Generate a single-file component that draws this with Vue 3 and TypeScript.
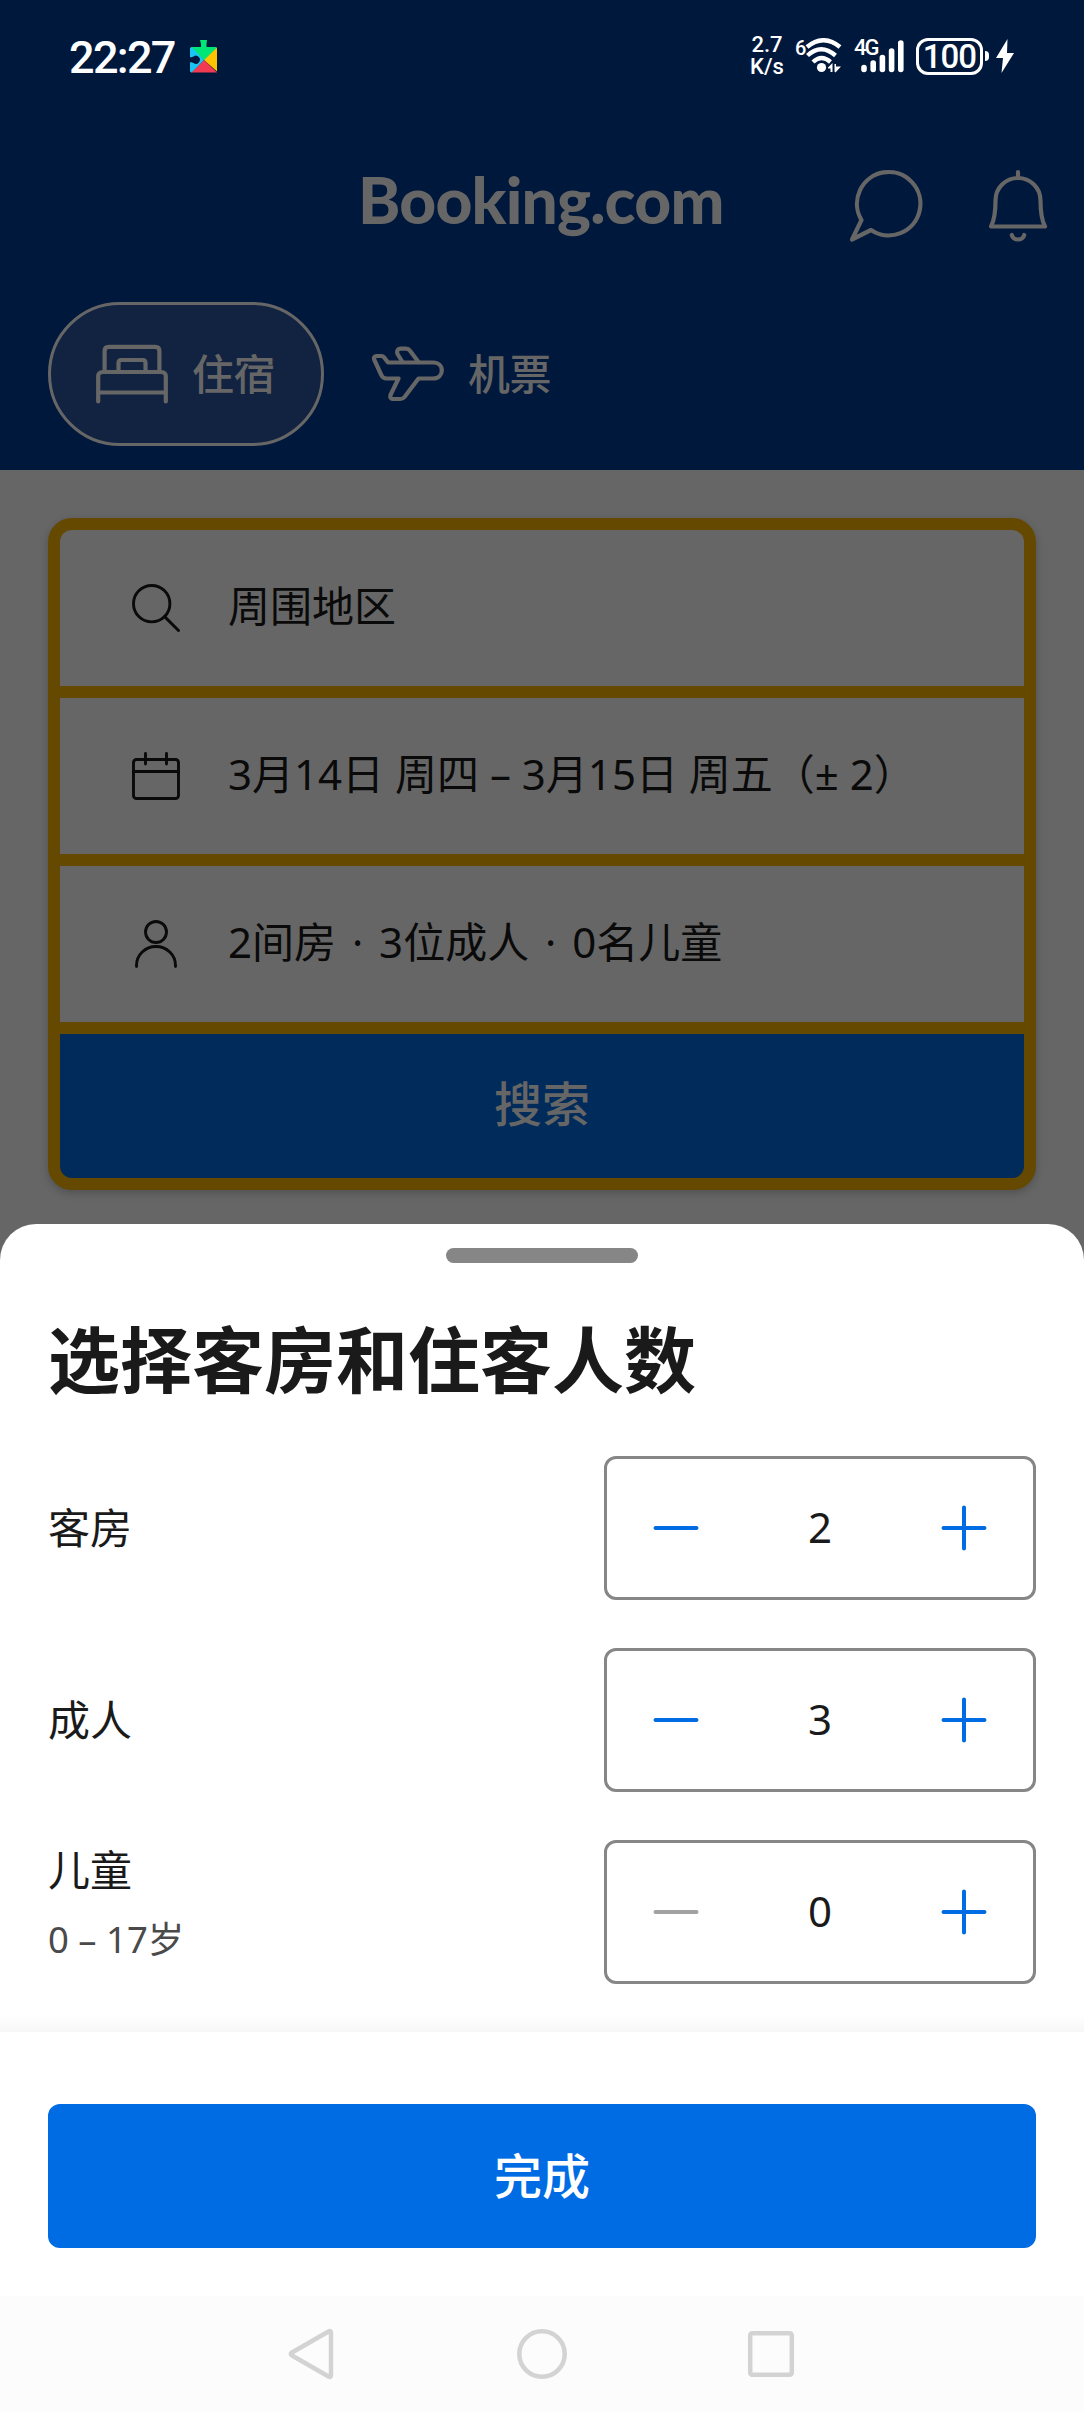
<script setup lang="ts">
import { reactive } from 'vue'

interface Counter {
  label: string
  hint?: string
  value: number
  min: number
}

const counters = reactive<Counter[]>([
  { label: '客房', value: 2, min: 1 },
  { label: '成人', value: 3, min: 1 },
  { label: '儿童', hint: '0 – 17岁', value: 0, min: 0 },
])

function change(c: Counter, delta: number) {
  c.value = Math.max(c.min, c.value + delta)
}
</script>

<template>
  <div class="screen">
    <header class="top">
      <div class="status">
        <span class="time">22:27</span>
        <svg class="puzzle" width="28" height="33" viewBox="0 0 28 33">
          <path d="M1 8 Q1 7 2 7 H11 V4 L10 0 H17 L16.500 4 V7 H26 L27 8 L14 20.500 Z" fill="#00e676" />
          <path d="M27 7.500 V31.500 L14 20 Z" fill="#ffc400" />
          <path d="M1 32.500 L14 20 L27 32.500 Z" fill="#f23b52" />
          <path d="M0 8 L1.500 7 L14 20 L1.500 32.500 L0 31.500 V22.500 C1.500 22 2 22.500 3.500 23 A4 4 0 1 0 3.500 16.500 C2 17 1.500 17.500 0 17 Z" fill="#18c5f5" />
        </svg>
        <div class="status-right">
          <div class="speed"><span>2.7</span><span>K/s</span></div>
          <div class="wifi">
            <span class="tiny">6</span>
            <svg width="38" height="36" viewBox="0 0 38 36" fill="none" stroke="#fff" stroke-width="4.400">
              <path d="M3 9 Q19.500 -4.500 36 9" />
              <path d="M3.500 17.500 Q17 5 31.500 17.500" />
              <path d="M9 24 Q17.500 16 26.500 24" />
              <circle cx="17.500" cy="29.500" r="4.600" fill="#fff" stroke="none" />
              <path d="M24 29.500 L28.500 25 V34 H26.500 V30.500 H24 Z M30.500 26 H32 V28.500 H37 L31.500 34.500 L30.500 33.500 Z" fill="#fff" stroke="none" />
            </svg>
          </div>
          <div class="cell">
            <span class="tiny net">4G</span>
            <svg width="50" height="36" viewBox="0 0 50 36" stroke="#fff" stroke-width="5.600" stroke-linecap="round">
              <path d="M10 29.500 V31.500 M19.200 25 V31.500 M28.400 19.500 V31.500 M37.600 13 V31.500 M46.800 5 V31.500" />
            </svg>
          </div>
          <div class="battery">100</div>
          <i class="nub"></i>
          <svg class="bolt" width="20" height="34" viewBox="0 0 20 34"><path d="M12.500 0 L1 19 H8 L6.500 34 L19 14 H12 Z" fill="#fff" /></svg>
        </div>
      </div>

      <div class="brandbar">
        <span class="logo">Booking.com</span>
        <svg class="chat" width="76" height="76" viewBox="0 0 76 76" fill="none" stroke="#666" stroke-width="4.200" stroke-linejoin="round" stroke-linecap="round">
          <path d="M21 62 L2 71.500 L11.500 52 A31.700 31.700 0 1 1 21 62 Z" />
        </svg>
        <svg class="bell" width="62" height="76" viewBox="0 0 62 76" fill="none" stroke="#666" stroke-width="4.200" stroke-linejoin="round" stroke-linecap="round">
          <path d="M31 4 V10 M8.500 32.500 A22.500 22.500 0 0 1 53.500 32.500 C53.500 44 54.500 52 58 58.500 H4 C7.500 52 8.500 44 8.500 32.500 Z M24.800 67 A6.300 5.500 0 0 0 37.200 67" />
        </svg>
      </div>

      <nav class="tabs">
        <div class="tab active">
          <svg width="72" height="60" viewBox="0 0 72 60" fill="none" stroke="#666" stroke-width="4.200" stroke-linecap="round" stroke-linejoin="round">
            <path d="M8.600 27 V7 Q8.600 2.800 12.800 2.800 H59.200 Q63.400 2.800 63.400 7 V27" />
            <path d="M22.500 27 V19 Q22.500 16 25.500 16 H46.500 Q49.500 16 49.500 19 V27" />
            <path d="M2.200 57.500 V32.500 Q2.200 28 7 28 H65 Q69.800 28 69.800 32.500 V57.500 M2.200 48.500 H69.800" />
          </svg>
          <span>住宿</span>
        </div>
        <div class="tab">
          <svg width="72" height="60" viewBox="0 0 72 60" fill="none" stroke="#666" stroke-width="4.200" stroke-linecap="round" stroke-linejoin="round">
            <path d="M16 18.500 H61 C66.500 18.500 69.800 22 69.800 26.500 C69.800 31 66.500 34.500 61 34.500 H46.500 L32.500 53 Q30.800 55 28.500 55 H21.500 Q17.500 55 18.500 51 L26.500 34.500 H14.500 Q10.800 34.500 9.300 31 L2.600 16.500 Q0.800 12.500 4.500 12 H9.500 Q11 12 12 13.300 Z" />
            <path d="M30.500 18 L25.500 10 Q24 5 28.500 4.600 H34 Q36.500 4.600 38 6.700 L46.500 18" />
          </svg>
          <span>机票</span>
        </div>
      </nav>
    </header>

    <main class="backdrop">
      <section class="search-card">
        <div class="field">
          <svg width="48" height="48" viewBox="0 0 48 48" fill="none" stroke="#0a0a0a" stroke-width="2.900" stroke-linecap="round">
            <circle cx="19.700" cy="19.700" r="18.200" /><path d="M32.600 32.600 L46.500 46.500" />
          </svg>
          <span>周围地区</span>
        </div>
        <div class="field">
          <svg width="48" height="48" viewBox="0 0 48 48" fill="none" stroke="#0a0a0a" stroke-width="2.900" stroke-linecap="round">
            <rect x="1.500" y="7.500" width="45" height="39" rx="3" /><path d="M2 19.500 H46 M13.500 1.500 V12 M34.500 1.500 V12" />
          </svg>
          <span>3月14日 周四 – 3月15日 周五（± 2）</span>
        </div>
        <div class="field">
          <svg width="48" height="48" viewBox="0 0 48 48" fill="none" stroke="#0a0a0a" stroke-width="2.900" stroke-linecap="round">
            <circle cx="24" cy="12" r="10.500" /><path d="M4.500 46.500 V45.500 A19.500 19 0 0 1 43.500 45.500 V46.500" />
          </svg>
          <span class="guests">2间房 · 3位成人 · 0名儿童</span>
        </div>
        <div class="search-btn">搜索</div>
      </section>
    </main>

    <div class="sheet-wrap">
      <section class="sheet">
        <div class="handle"></div>
        <h1>选择客房和住客人数</h1>
        <div class="counters">
          <div v-for="c in counters" :key="c.label" class="counter">
            <div class="names" :class="{ double: c.hint }">
              <span class="label">{{ c.label }}</span>
              <span v-if="c.hint" class="hint">{{ c.hint }}</span>
            </div>
            <div class="stepper">
              <svg :class="{ off: c.value <= c.min && c.min === 0 }" width="46" height="46" viewBox="0 0 46 46" @click="change(c, -1)">
                <path d="M2.500 23 H43.500" />
              </svg>
              <span class="value">{{ c.value }}</span>
              <svg width="46" height="46" viewBox="0 0 46 46" @click="change(c, 1)">
                <path d="M2.500 23 H43.500 M23 2.500 V43.500" />
              </svg>
            </div>
          </div>
        </div>
        <div class="fade"></div>
        <footer class="footer"><button class="done">完成</button></footer>
      </section>
    </div>

    <div class="navbar">
      <svg width="52" height="52" viewBox="0 0 52 52"><path d="M41.500 3.500 Q44 2 44 5 V47 Q44 50 41.500 48.500 L5 27.500 Q2.500 26 5 24.500 Z" /></svg>
      <svg width="52" height="52" viewBox="0 0 52 52"><circle cx="26" cy="26" r="22.700" /></svg>
      <svg width="52" height="52" viewBox="0 0 52 52"><rect x="5.200" y="5.200" width="41.600" height="41.600" rx="2" /></svg>
    </div>
  </div>
</template>

<style>
html,
body {
  margin: 0;
  background: #fff;
}
</style>

<style scoped>
.screen {
  width: 1084px;
  height: 2412px;
  display: flex;
  flex-direction: column;
  overflow: hidden;
  font-family: "Noto Sans", "Noto Sans CJK SC", sans-serif;
  font-size: 42px;
  color: #1a1a1a;
}
svg {
  display: block;
  flex: none;
}
.top {
  height: 470px;
  background: #00183c;
  color: #666;
}
.status {
  height: 112px;
  box-sizing: border-box;
  padding: 0 69px 0 69px;
  display: flex;
  align-items: center;
  color: #fff;
  font-family: Roboto, sans-serif;
}
.time {
  width: 120px;
  font-size: 45px;
  font-weight: 500;
  letter-spacing: -1.7px;
  line-height: 52px;
  margin-top: 3px;
}
.puzzle {
  margin-left: 1px;
}
.status-right {
  margin-left: auto;
  display: flex;
  align-items: center;
}
.speed {
  width: 36px;
  display: flex;
  flex-direction: column;
  align-items: center;
  font-size: 22px;
  font-weight: 500;
  line-height: 22px;
}
.speed span {
  height: 22px;
}
.tiny {
  font-size: 22px;
  font-weight: 500;
  line-height: 20px;
}
.wifi {
  display: flex;
  align-items: flex-start;
  margin-left: 11px;
}
.wifi .tiny {
  width: 9px;
  font-size: 20px;
  margin-left: -1px;
  margin-right: 1px;
}
.wifi svg {
  margin-left: -1px;
}
.cell {
  position: relative;
  margin-left: 12px;
}
.net {
  position: absolute;
  left: 0;
  top: 0;
  letter-spacing: -2px;
}
.battery {
  width: 67px;
  height: 37px;
  box-sizing: border-box;
  margin-left: 12px;
  border: 3px solid #fff;
  border-radius: 12px;
  font-size: 33px;
  font-weight: 500;
  line-height: 32px;
  letter-spacing: -1px;
  text-align: center;
}
.nub {
  width: 4px;
  height: 10px;
  margin-left: 2px;
  border-radius: 0 4px 4px 0;
  background: #fff;
}
.bolt {
  margin-left: 6px;
}
.brandbar {
  height: 190px;
  box-sizing: border-box;
  padding: 56px 35px 0 358px;
  display: flex;
  align-items: flex-start;
}
.logo {
  width: 369px;
  font-family: Lato, sans-serif;
  font-size: 64px;
  font-weight: 900;
  letter-spacing: -0.8px;
  line-height: 76px;
  margin-top: -6px;
}
.chat {
  margin-left: 123px;
}
.bell {
  margin-left: 61px;
}
.tabs {
  display: flex;
  align-items: center;
  padding-left: 48px;
  font-weight: 500;
  letter-spacing: -0.5px;
}
.tab {
  height: 144px;
  box-sizing: border-box;
  padding: 0 48px;
  display: flex;
  align-items: center;
  gap: 24px;
  line-height: 60px;
}
.tab.active {
  width: 276px;
  padding: 0 45px;
  border: 3px solid #666;
  border-radius: 72px;
  background: #112340;
}
.backdrop {
  height: 754px;
  box-sizing: border-box;
  padding: 48px 48px 0;
  background: #666;
}
.search-card {
  display: flex;
  flex-direction: column;
  gap: 12px;
  padding: 12px;
  border-radius: 24px;
  background: #664900;
  box-shadow: 0 3px 9px rgba(0, 0, 0, 0.22);
}
.field {
  height: 156px;
  box-sizing: border-box;
  padding: 0 72px;
  display: flex;
  align-items: center;
  gap: 48px;
  background: #666;
  color: #0a0a0a;
  line-height: 60px;
  white-space: nowrap;
}
.field span {
  margin-top: -4px;
}
.field .guests {
  word-spacing: 5px;
}
.field:first-child {
  border-radius: 12px 12px 0 0;
}
.search-btn {
  height: 144px;
  border-radius: 0 0 12px 12px;
  background: #002b5b;
  color: #666;
  font-size: 48px;
  font-weight: 500;
  line-height: 140px;
  text-align: center;
}
.sheet-wrap {
  height: 1072px;
  background: #666;
}
.sheet {
  height: 1072px;
  border-radius: 36px 36px 0 0;
  background: #fff;
  display: flex;
  flex-direction: column;
}
.handle {
  width: 192px;
  height: 15px;
  margin: 24px auto 0;
  border-radius: 8px;
  background: #868686;
}
h1 {
  margin: 42px 48px 0;
  height: 109px;
  font-size: 72px;
  font-weight: 700;
  line-height: 108px;
}
.counters {
  display: flex;
  flex-direction: column;
  gap: 48px;
  margin: 42px 48px 0;
}
.counter {
  height: 144px;
  display: flex;
  align-items: center;
  justify-content: space-between;
}
.names {
  display: flex;
  flex-direction: column;
}
.names.double {
  padding-bottom: 17px;
}
.label {
  line-height: 60px;
}
.hint {
  margin-top: 11px;
  font-size: 36.5px;
  line-height: 56px;
  color: #4a4a4a;
}
.stepper {
  width: 432px;
  height: 144px;
  box-sizing: border-box;
  padding: 0 46px;
  display: flex;
  align-items: center;
  justify-content: space-between;
  border: 3px solid #868686;
  border-radius: 12px;
}
.value {
  line-height: 60px;
  margin-top: -3px;
}
.stepper svg {
  fill: none;
  stroke: #006ce4;
  stroke-width: 4;
  stroke-linecap: round;
}
.stepper svg.off {
  stroke: #a2a2a2;
}
.fade {
  height: 18px;
  margin-top: 30px;
  background: linear-gradient(#fff, #f7f7f7);
}
.footer {
  padding: 72px 48px 48px;
}
.done {
  display: block;
  width: 100%;
  height: 144px;
  padding: 0 0 6px;
  border: 0;
  border-radius: 12px;
  background: #006ce4;
  color: #fff;
  font-family: inherit;
  font-size: 48px;
  font-weight: 500;
}
.navbar {
  height: 116px;
  display: flex;
  align-items: center;
  justify-content: center;
  gap: 177px;
  background: #fcfcfc;
}
.navbar svg {
  fill: none;
  stroke: #d3d3d3;
  stroke-width: 4.5;
  stroke-linejoin: round;
}
</style>
